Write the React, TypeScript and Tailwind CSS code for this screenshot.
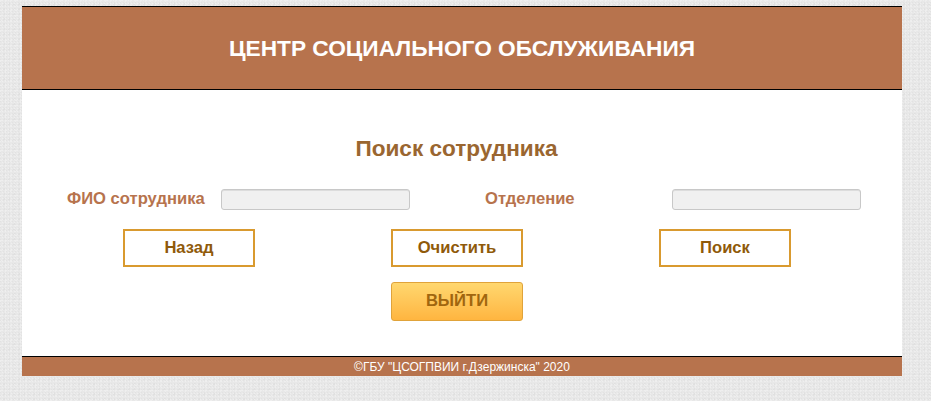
export default function App() {
  return (
    <div className="h-[401px] overflow-hidden bg-[#e8e8e8] bg-[image:linear-gradient(45deg,#e2e2e2_25%,transparent_25%,transparent_75%,#efefef_75%),linear-gradient(135deg,#eeeeee_25%,transparent_25%,transparent_75%,#e0e0e0_75%)] bg-[length:3px_3px,5px_5px] pt-[6px] font-['Liberation_Sans',Arial,sans-serif]">
      <div className="ml-[22px] w-[880px] bg-white">
        {/* Header */}
        <header className="flex h-[84px] items-center justify-center border-y border-black bg-[#b7734d]">
          <h1 className="text-[22.7px] font-bold text-white">ЦЕНТР СОЦИАЛЬНОГО ОБСЛУЖИВАНИЯ</h1>
        </header>

        <main className="h-[266px] pt-[45px]">
          <h2 className="pr-[11px] text-center text-[22.6px] leading-[28px] font-bold text-[#9a6630]">Поиск сотрудника</h2>

          <div className="mt-[26px] flex h-[21px] items-center pl-[45px] text-[16.6px] font-bold text-[#b7734d]">
            <label className="w-[154px]">ФИО сотрудника</label>
            <input className="h-[21px] w-[189px] rounded-[3px] border border-[#c8c8c8] bg-[#f0f0f0] shadow-[inset_0_1px_0_#dcdcdc]" />
            <label className="ml-[75px] w-[187px]">Отделение</label>
            <input className="h-[21px] w-[189px] rounded-[3px] border border-[#c8c8c8] bg-[#f0f0f0] shadow-[inset_0_1px_0_#dcdcdc]" />
          </div>

          <div className="mt-[19px] flex gap-[136px] pl-[101px]">
            <button className="h-[38px] w-[132px] border-2 border-[#d99a2f] bg-white text-[16.6px] font-bold text-[#8f5a0a]">Назад</button>
            <button className="h-[38px] w-[132px] border-2 border-[#d99a2f] bg-white text-[16.6px] font-bold text-[#8f5a0a]">Очистить</button>
            <button className="h-[38px] w-[132px] border-2 border-[#d99a2f] bg-white text-[16.6px] font-bold text-[#8f5a0a]">Поиск</button>
          </div>

          <div className="mt-[15px] pl-[369px]">
            <button className="h-[39px] w-[132px] rounded-[3px] border border-[#e0a33a] bg-gradient-to-b from-[#ffd76e] to-[#ffb53f] text-[16.6px] font-bold text-[#a0660f]">ВЫЙТИ</button>
          </div>
        </main>

        {/* Footer */}
        <footer className="flex h-[20px] items-center justify-center border-t border-black bg-[#b7734d] text-[12px] font-normal text-white">
          ©ГБУ "ЦСОГПВИИ г.Дзержинска" 2020
        </footer>
      </div>
    </div>
  );
}
